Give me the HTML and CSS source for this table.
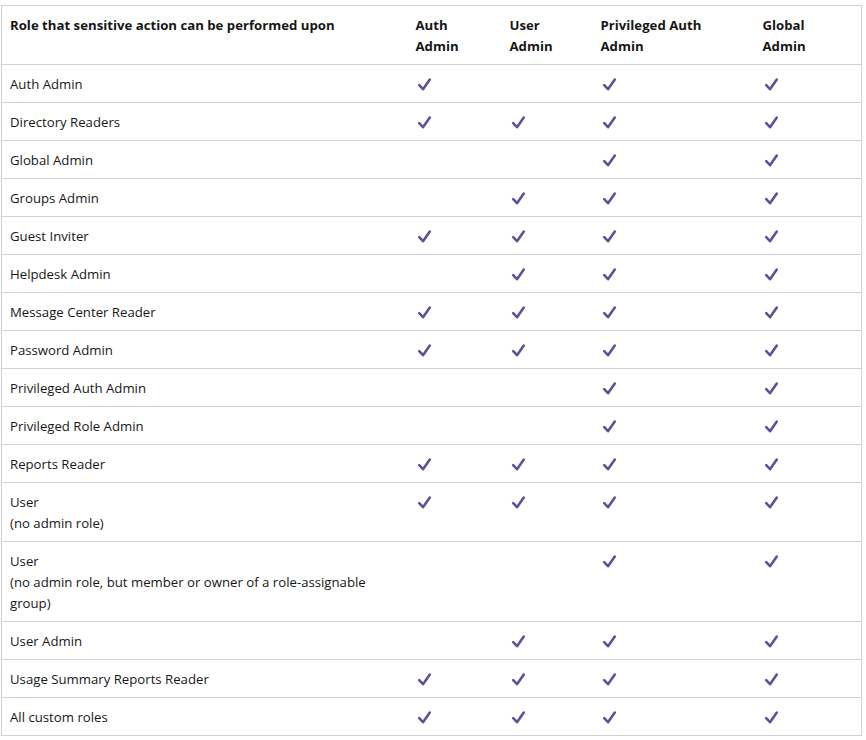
FILE: index.html
```html
<!DOCTYPE html>
<html>
<head>
<meta charset="utf-8">
<link rel="stylesheet" href="styles.css">
</head>
<body>
<svg width="0" height="0" class="defs">
  <symbol id="ck" viewBox="0 0 15 15"><path d="M2.2 8.2 L6 12.2 L12.8 2.6" fill="none" stroke="#5f5198" stroke-width="2.6" stroke-linecap="round" stroke-linejoin="round"/></symbol>
</svg>
<table class="roles">
  <colgroup>
    <col class="c-role">
    <col class="c-auth">
    <col class="c-user">
    <col class="c-priv">
    <col class="c-global">
  </colgroup>
  <thead>
    <tr>
      <th>Role that sensitive action can be performed upon</th>
      <th>Auth<br>Admin</th>
      <th>User<br>Admin</th>
      <th>Privileged Auth<br>Admin</th>
      <th>Global<br>Admin</th>
    </tr>
  </thead>
  <tbody>
    <tr><td>Auth Admin</td><td><svg class="check"><use href="#ck"/></svg></td><td></td><td><svg class="check"><use href="#ck"/></svg></td><td><svg class="check"><use href="#ck"/></svg></td></tr>
    <tr><td>Directory Readers</td><td><svg class="check"><use href="#ck"/></svg></td><td><svg class="check"><use href="#ck"/></svg></td><td><svg class="check"><use href="#ck"/></svg></td><td><svg class="check"><use href="#ck"/></svg></td></tr>
    <tr><td>Global Admin</td><td></td><td></td><td><svg class="check"><use href="#ck"/></svg></td><td><svg class="check"><use href="#ck"/></svg></td></tr>
    <tr><td>Groups Admin</td><td></td><td><svg class="check"><use href="#ck"/></svg></td><td><svg class="check"><use href="#ck"/></svg></td><td><svg class="check"><use href="#ck"/></svg></td></tr>
    <tr><td>Guest Inviter</td><td><svg class="check"><use href="#ck"/></svg></td><td><svg class="check"><use href="#ck"/></svg></td><td><svg class="check"><use href="#ck"/></svg></td><td><svg class="check"><use href="#ck"/></svg></td></tr>
    <tr><td>Helpdesk Admin</td><td></td><td><svg class="check"><use href="#ck"/></svg></td><td><svg class="check"><use href="#ck"/></svg></td><td><svg class="check"><use href="#ck"/></svg></td></tr>
    <tr><td>Message Center Reader</td><td><svg class="check"><use href="#ck"/></svg></td><td><svg class="check"><use href="#ck"/></svg></td><td><svg class="check"><use href="#ck"/></svg></td><td><svg class="check"><use href="#ck"/></svg></td></tr>
    <tr><td>Password Admin</td><td><svg class="check"><use href="#ck"/></svg></td><td><svg class="check"><use href="#ck"/></svg></td><td><svg class="check"><use href="#ck"/></svg></td><td><svg class="check"><use href="#ck"/></svg></td></tr>
    <tr><td>Privileged Auth Admin</td><td></td><td></td><td><svg class="check"><use href="#ck"/></svg></td><td><svg class="check"><use href="#ck"/></svg></td></tr>
    <tr><td>Privileged Role Admin</td><td></td><td></td><td><svg class="check"><use href="#ck"/></svg></td><td><svg class="check"><use href="#ck"/></svg></td></tr>
    <tr><td>Reports Reader</td><td><svg class="check"><use href="#ck"/></svg></td><td><svg class="check"><use href="#ck"/></svg></td><td><svg class="check"><use href="#ck"/></svg></td><td><svg class="check"><use href="#ck"/></svg></td></tr>
    <tr><td>User<br>(no admin role)</td><td><svg class="check"><use href="#ck"/></svg></td><td><svg class="check"><use href="#ck"/></svg></td><td><svg class="check"><use href="#ck"/></svg></td><td><svg class="check"><use href="#ck"/></svg></td></tr>
    <tr><td>User<br>(no admin role, but member or owner of a role-assignable<br>group)</td><td></td><td></td><td><svg class="check"><use href="#ck"/></svg></td><td><svg class="check"><use href="#ck"/></svg></td></tr>
    <tr><td>User Admin</td><td></td><td><svg class="check"><use href="#ck"/></svg></td><td><svg class="check"><use href="#ck"/></svg></td><td><svg class="check"><use href="#ck"/></svg></td></tr>
    <tr><td>Usage Summary Reports Reader</td><td><svg class="check"><use href="#ck"/></svg></td><td><svg class="check"><use href="#ck"/></svg></td><td><svg class="check"><use href="#ck"/></svg></td><td><svg class="check"><use href="#ck"/></svg></td></tr>
    <tr><td>All custom roles</td><td><svg class="check"><use href="#ck"/></svg></td><td><svg class="check"><use href="#ck"/></svg></td><td><svg class="check"><use href="#ck"/></svg></td><td><svg class="check"><use href="#ck"/></svg></td></tr>
  </tbody>
</table>
</body>
</html>
```
FILE: styles.css
```css
html, body {
  margin: 0;
  padding: 0;
  background: #ffffff;
}
body {
  padding: 5px 0 0 1px;
  font-family: "Open Sans", "Noto Sans", "Liberation Sans", sans-serif;
  font-size: 13.2px;
  color: #171717;
}
.defs {
  position: absolute;
  width: 0;
  height: 0;
}
.roles {
  border-collapse: collapse;
  table-layout: fixed;
  width: 860px;
}
.c-role { width: 406px; }
.c-auth { width: 94px; }
.c-user { width: 91px; }
.c-priv { width: 162px; }
.c-global { width: 107px; }
.roles th,
.roles td {
  border: 1px solid #d1d1d1;
  border-width: 1px 0;
  padding: 9px 8px 7px 8px;
  line-height: 21px;
  text-align: left;
  vertical-align: top;
}
.roles th:first-child,
.roles td:first-child { border-left: 1px solid #d1d1d1; }
.roles th:last-child,
.roles td:last-child { border-right: 1px solid #d1d1d1; }
.roles th {
  font-weight: 700;
  color: #161616;
}
.check {
  display: block;
  width: 15px;
  height: 15px;
  margin-top: 3px;
  margin-left: 1px;
}
```
